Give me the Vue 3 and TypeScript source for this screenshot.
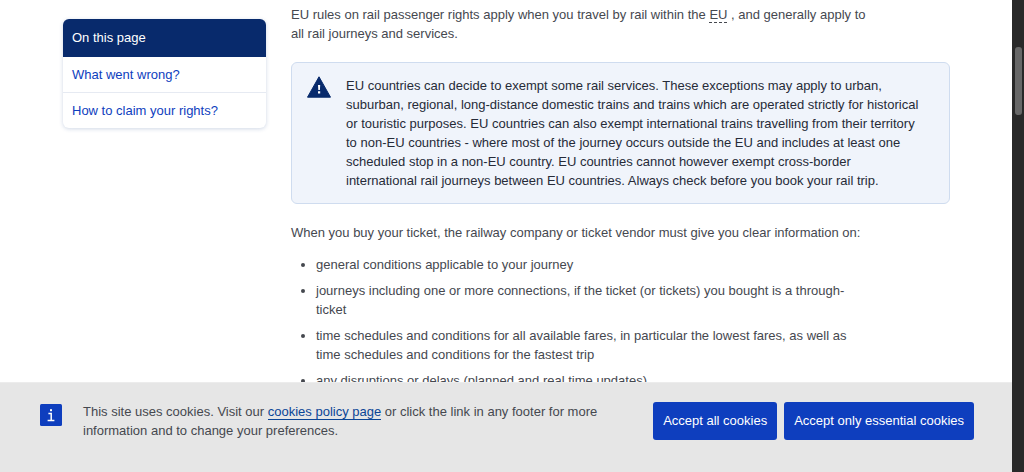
<script setup lang="ts">
interface SectionLink {
  id: string
  label: string
}

const sections: SectionLink[] = [
  { id: 'what-went-wrong', label: 'What went wrong?' },
  { id: 'claim-your-rights', label: 'How to claim your rights?' },
]

const ticketInformation: string[] = [
  'general conditions applicable to your journey',
  'journeys including one or more connections, if the ticket (or tickets) you bought is a through-ticket',
  'time schedules and conditions for all available fares, in particular the lowest fares, as well as time schedules and conditions for the fastest trip',
  'any disruptions or delays (planned and real time updates)',
]

const cookieChoices: string[] = ['Accept all cookies', 'Accept only essential cookies']
</script>

<template>
  <div class="viewport">
    <div class="screen">
      <div class="page">
        <nav class="toc" aria-labelledby="toc-title">
          <h2 id="toc-title" class="toc-title">On this page</h2>
          <ul class="toc-list">
            <li v-for="section in sections" :key="section.id" class="toc-item">
              <a class="toc-link" :href="`#${section.id}`">{{ section.label }}</a>
            </li>
          </ul>
        </nav>

        <main class="article">
          <p class="text">
            EU rules on rail passenger rights apply when you travel by rail within the
            <abbr class="abbr" title="European Union">EU</abbr> , and generally apply to all rail
            journeys and services.
          </p>

          <div class="notice" role="note">
            <svg class="notice-icon" viewBox="0 0 24 22" aria-hidden="true">
              <path
                d="M12 .8 23.5 21.2H.5Z"
                fill="#082a6c"
                stroke="#082a6c"
                stroke-width="1"
                stroke-linejoin="round"
              />
              <path d="M11 9h2.2l-.3 5h-1.6ZM11 15.2h2.2v2.2H11Z" fill="#fff" />
            </svg>
            <p class="notice-text">
              EU countries can decide to exempt some rail services. These exceptions may apply to
              urban, suburban, regional, long-distance domestic trains and trains which are operated
              strictly for historical or touristic purposes. EU countries can also exempt
              international trains travelling from their territory to non-EU countries - where most
              of the journey occurs outside the EU and includes at least one scheduled stop in a
              non-EU country. EU countries cannot however exempt cross-border international rail
              journeys between EU countries. Always check before you book your rail trip.
            </p>
          </div>

          <p class="text">
            When you buy your ticket, the railway company or ticket vendor must give you clear
            information on:
          </p>
          <ul class="list">
            <li v-for="entry in ticketInformation" :key="entry" class="list-item">{{ entry }}</li>
          </ul>
        </main>
      </div>

      <section class="cookies" aria-label="Cookies">
        <svg class="cookies-icon" viewBox="0 0 22 22" aria-hidden="true">
          <rect width="22" height="22" rx="1.5" fill="#0e3ebe" />
          <path
            d="M8.4 9.4H11.2V16.3M7.6 16.6H14.4"
            fill="none"
            stroke="#fff"
            stroke-width="1.5"
          />
          <rect x="10" y="5.2" width="2" height="2" fill="#fff" />
        </svg>
        <p class="cookies-text">
          This site uses cookies. Visit our
          <a class="cookies-link" href="#cookies-policy">cookies policy page</a>
          or click the link in any footer for more information and to change your preferences.
        </p>
        <div class="cookies-actions">
          <button v-for="choice in cookieChoices" :key="choice" class="button" type="button">
            {{ choice }}
          </button>
        </div>
      </section>
    </div>

    <div class="scrollbar" aria-hidden="true">
      <div class="scrollbar-thumb"></div>
    </div>
  </div>
</template>

<style>
body {
  margin: 0;
}
</style>

<style scoped>
.viewport {
  display: flex;
  height: 100vh;
  overflow: hidden;
  background: #fff;
  color: #45484f;
  font-family: "Liberation Sans", Arial, sans-serif;
  font-size: 13px;
  line-height: 19px;
}

.screen {
  display: flex;
  flex: 1;
  flex-direction: column;
  min-width: 0;
}

.page {
  display: grid;
  flex: 1;
  grid-template-columns: 203px minmax(0, 1fr);
  gap: 25px;
  align-items: start;
  min-height: 0;
  padding: 0 62px 0 63px;
  overflow: hidden;
}

.toc {
  margin-top: 19px;
  overflow: hidden;
  border-radius: 6px;
  background: #fff;
  box-shadow: 0 1px 4px rgba(20, 60, 130, 0.2);
}

.toc-title {
  margin: 0;
  padding: 9px 9px 10px;
  background: #082a6c;
  color: #fff;
  font-size: 13px;
  font-weight: 400;
}

.toc-list {
  margin: 0;
  padding: 0;
  list-style: none;
}

.toc-item + .toc-item {
  border-top: 1px solid #e6eaf2;
}

.toc-link {
  display: block;
  padding: 8px 9px;
  color: #0e3ebe;
  text-decoration: none;
}

.article {
  padding-top: 5px;
}

.text {
  max-width: 580px;
  margin: 0;
}

.abbr {
  border-bottom: 1px dashed #45484f;
  text-decoration: none;
}

.notice {
  display: flex;
  gap: 15px;
  margin: 19px 0;
  padding: 13px 27px 13px 15px;
  border: 1px solid #cfdcef;
  border-radius: 6px;
  background: #f0f4fb;
  color: #262b38;
}

.notice-icon {
  flex: none;
  width: 24px;
  height: 22px;
}

.notice-text {
  margin: 0;
}

.list {
  display: grid;
  gap: 7px;
  max-width: 532px;
  margin: 13px 0 0;
  padding-left: 25px;
}

.cookies {
  display: flex;
  align-items: flex-start;
  padding: 19px 38px 32px 40px;
  border-top: 1px solid #ececec;
  background: #e6e6e6;
}

.cookies-icon {
  flex: none;
  width: 22px;
  height: 22px;
  margin: 2px 21px 0 0;
}

.cookies-text {
  flex: 1;
  max-width: 530px;
  margin: 0;
}

.cookies-link {
  border-bottom: 1px solid #0b4596;
  color: #0b4596;
  text-decoration: none;
}

.cookies-actions {
  display: flex;
  gap: 7px;
  margin-left: auto;
}

.button {
  padding: 9px 10px 10px;
  border: 0;
  border-radius: 3px;
  background: #0e3ebe;
  color: #fff;
  font: inherit;
  white-space: nowrap;
  cursor: pointer;
}

.scrollbar {
  flex: none;
  box-sizing: border-box;
  width: 12px;
  padding: 47px 2px 0 3px;
  background: #292929;
}

.scrollbar-thumb {
  height: 68px;
  border-radius: 3px;
  background: #686868;
}
</style>
